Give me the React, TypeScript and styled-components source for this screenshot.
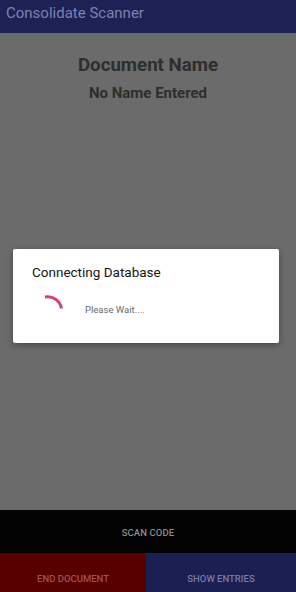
import React from "react";
import styled, { createGlobalStyle } from "styled-components";

const GlobalStyle = createGlobalStyle`
  html, body {
    margin: 0;
    padding: 0;
    background: #6b6b6b;
  }
  * {
    box-sizing: border-box;
  }
`;

const Screen = styled.div`
  position: relative;
  width: 296px;
  height: 592px;
  display: flex;
  flex-direction: column;
  font-family: Roboto, "Noto Sans", sans-serif;
  background: #6b6b6b;
  overflow: hidden;
`;

const AppBar = styled.div`
  height: 33px;
  background: #1e2153;
  display: flex;
  align-items: center;
  padding: 0 6px;
  flex-shrink: 0;
`;

const AppTitle = styled.h1`
  margin: 0;
  font-size: 15px;
  font-weight: 400;
  color: #7c82b4;
  margin-top: -7px;
`;

const Content = styled.main`
  flex: 1;
  display: flex;
  flex-direction: column;
  align-items: center;
  padding-top: 21px;
`;

const DocLabel = styled.h2`
  margin: 0;
  font-size: 18.7px;
  font-weight: 700;
  color: #2e2e2e;
`;

const DocName = styled.p`
  margin: 8px 0 0;
  font-size: 15px;
  font-weight: 700;
  color: #2e2e2e;
`;

const ScanBar = styled.button`
  height: 43px;
  flex-shrink: 0;
  border: none;
  background: #030303;
  color: #8c8c8c;
  font-family: inherit;
  font-size: 9.5px;
  font-weight: 500;
  letter-spacing: 0.1px;
  padding: 2px 0 0;
`;

const ActionRow = styled.div`
  height: 39px;
  display: flex;
  flex-shrink: 0;
`;

const ActionButton = styled.button<{ $tone: "red" | "blue" }>`
  flex: ${({ $tone }) => ($tone === "red" ? "0 0 146px" : "1")};
  border: none;
  padding: 0;
  padding-top: 12px;
  font-family: inherit;
  font-size: 9.5px;
  font-weight: 500;
  background: ${({ $tone }) => ($tone === "red" ? "#560000" : "#1c1f52")};
  color: ${({ $tone }) => ($tone === "red" ? "#a25252" : "#767ba6")};
`;

const Overlay = styled.div`
  position: absolute;
  inset: 0;
  display: flex;
  align-items: flex-start;
  justify-content: center;
  padding-top: 249px;
`;

const Dialog = styled.div`
  width: 266px;
  height: 94px;
  margin-right: 4px;
  background: #ffffff;
  border-radius: 2px;
  box-shadow: 0 2px 6px rgba(0, 0, 0, 0.35);
  padding: 15px 19px 0;
`;

const DialogTitle = styled.h3`
  margin: 0;
  font-size: 13.5px;
  font-weight: 400;
  color: #151515;
`;

const DialogBody = styled.div`
  display: flex;
  align-items: center;
  margin-top: 9px;
  gap: 21px;
`;

const Spinner = styled.svg`
  width: 34px;
  height: 34px;
  margin-left: -2px;
  flex-shrink: 0;
`;

const WaitText = styled.span`
  font-size: 9.5px;
  color: #6a6a6a;
  margin-top: 6px;
`;

export default function App() {
  return (
    <>
      <GlobalStyle />
      <Screen>
        <AppBar>
          <AppTitle>Consolidate Scanner</AppTitle>
        </AppBar>
        <Content>
          <DocLabel>Document Name</DocLabel>
          <DocName>No Name Entered</DocName>
        </Content>
        <ScanBar>SCAN CODE</ScanBar>
        <ActionRow>
          <ActionButton $tone="red">END DOCUMENT</ActionButton>
          <ActionButton $tone="blue">SHOW ENTRIES</ActionButton>
        </ActionRow>
        <Overlay>
          <Dialog>
            <DialogTitle>Connecting Database</DialogTitle>
            <DialogBody>
              <Spinner viewBox="0 0 34 34">
                <path
                  d="M 15 8 A 14 14 0 0 1 31.5 19.5"
                  fill="none"
                  stroke="#cf4577"
                  strokeWidth="3"
                  strokeLinecap="butt"
                />
              </Spinner>
              <WaitText>Please Wait....</WaitText>
            </DialogBody>
          </Dialog>
        </Overlay>
      </Screen>
    </>
  );
}
